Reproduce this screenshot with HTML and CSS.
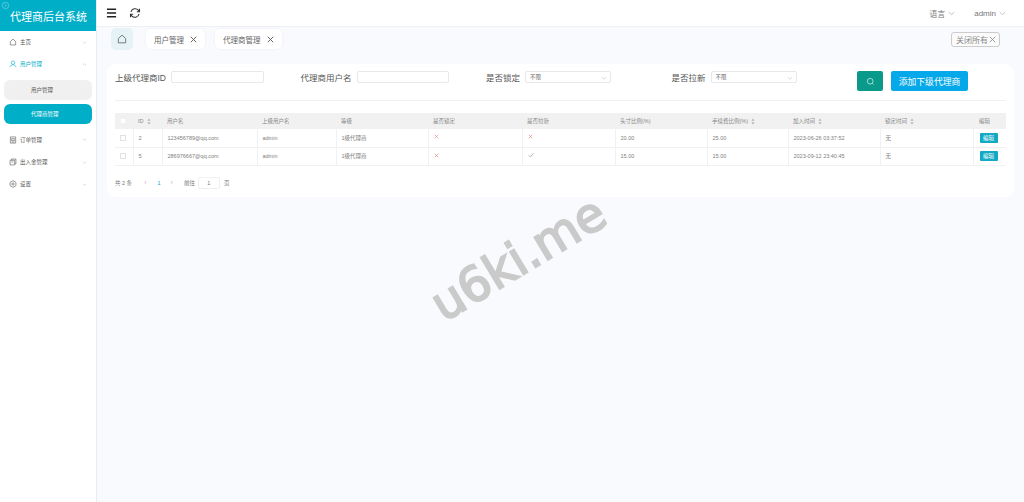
FILE: index.html
```html
<!DOCTYPE html>
<html lang="zh">
<head>
<meta charset="utf-8">
<title>代理商后台系统</title>
<link rel="stylesheet" href="styles.css">
</head>
<body>
<div class="app">
  <aside class="sidebar">
    <div class="brand">
      <svg class="brand-mark" viewBox="0 0 10 10"><circle cx="5" cy="5" r="3.6"/><path d="M4 3.4 6 5 4 6.6"/></svg>
      <span>代理商后台系统</span>
    </div>
    <nav class="menu">
      <div class="menu-item">
        <svg class="mi" viewBox="0 0 12 12"><path d="M2 5.4 6 1.6l4 3.800v5H2z"/></svg>
        <span class="mi-label">主页</span>
        <svg class="chev" viewBox="0 0 8 8"><path d="M1.500 3 4 5.200 6.500 3"/></svg>
      </div>
      <div class="menu-item active">
        <svg class="mi" viewBox="0 0 12 12"><circle cx="6" cy="4" r="2.600"/><path d="M1.600 10.800C2 8.400 4 7.200 6 7.200s4 1.200 4.400 3.600"/></svg>
        <span class="mi-label">用户管理</span>
        <svg class="chev" viewBox="0 0 8 8"><path d="M1.500 5 4 2.800 6.500 5"/></svg>
      </div>
      <div class="sub sub-plain">用户管理</div>
      <div class="sub sub-on">代理商管理</div>
      <div class="menu-item gap-top">
        <svg class="mi" viewBox="0 0 12 12"><path d="M2 1.400h8v9.200H2z"/><path d="M4 4h4v3H4zM4 9h4"/></svg>
        <span class="mi-label">订单管理</span>
        <svg class="chev" viewBox="0 0 8 8"><path d="M1.500 3 4 5.200 6.500 3"/></svg>
      </div>
      <div class="menu-item">
        <svg class="mi" viewBox="0 0 12 12"><path d="M1.600 3.400h7v7h-7zM3.600 3.400V1.600h6.800v7H8.600"/><path d="M3.600 6h3"/></svg>
        <span class="mi-label">出入金管理</span>
        <svg class="chev" viewBox="0 0 8 8"><path d="M1.500 3 4 5.200 6.500 3"/></svg>
      </div>
      <div class="menu-item">
        <svg class="mi" viewBox="0 0 12 12"><path d="M6 1 10.400 3.500v5L6 11 1.600 8.500v-5z"/><circle cx="6" cy="6" r="1.700"/></svg>
        <span class="mi-label">设置</span>
        <svg class="chev" viewBox="0 0 8 8"><path d="M1.500 3 4 5.200 6.500 3"/></svg>
      </div>
    </nav>
  </aside>

  <div class="main">
    <header class="topbar">
      <div class="top-tools">
        <svg class="tool-menu" viewBox="0 0 12 10"><path d="M1 1h10M1 5h10M1 9h10"/></svg>
        <svg class="tool-refresh" viewBox="0 0 12 12"><path d="M2 5a4.200 4.200 0 0 1 7.300-1.800L10.300 4.600M10 7a4.200 4.200 0 0 1-7.300 1.800L1.700 7.400"/><path d="M10.500 1.800v2.900H7.800M1.500 10.200V7.300h2.700"/></svg>
      </div>
      <div class="top-right">
        <span class="top-link">语言<svg class="top-chev" viewBox="0 0 10 6"><path d="M1 1l4 3.600L9 1"/></svg></span>
        <span class="top-link">admin<svg class="top-chev" viewBox="0 0 10 6"><path d="M1 1l4 3.600L9 1"/></svg></span>
      </div>
    </header>

    <div class="tabs">
      <div class="tab-home"><svg viewBox="0 0 12 12"><path d="M1.600 5.400 6 1.400l4.400 4v5.200H1.600z"/></svg></div>
      <div class="tab">用户管理<svg class="tab-x" viewBox="0 0 7 7"><path d="M.8.800l5.400 5.400M6.200.800.800 6.200"/></svg></div>
      <div class="tab">代理商管理<svg class="tab-x" viewBox="0 0 7 7"><path d="M.8.800l5.400 5.400M6.200.800.800 6.200"/></svg></div>
      <div class="close-all">关闭所有<svg class="close-x" viewBox="0 0 7 7"><path d="M.8.800l5.400 5.400M6.200.800.800 6.200"/></svg></div>
    </div>

    <section class="card">
      <div class="filters">
        <div class="field"><label>上级代理商ID</label><div class="input"></div></div>
        <div class="field f2"><label>代理商用户名</label><div class="input"></div></div>
        <div class="field f3"><label>是否锁定</label><div class="select">不限<svg viewBox="0 0 8 8"><path d="M1 3 4 5.600 7 3"/></svg></div></div>
        <div class="field f4"><label>是否拉新</label><div class="select">不限<svg viewBox="0 0 8 8"><path d="M1 3 4 5.600 7 3"/></svg></div></div>
        <button class="btn-search"><svg viewBox="0 0 12 12"><circle cx="5.600" cy="5.600" r="3.800"/><path d="M8.400 8.400 10 10"/></svg></button>
        <button class="btn-add">添加下级代理商</button>
      </div>

      <table class="grid">
        <thead>
          <tr>
            <th class="c-check"><span class="box head-box"></span></th>
            <th class="c-id"><span class="th-in">ID<svg class="sort" viewBox="0 0 4 7"><path d="M2 .4 3.600 2.800H.4zM2 6.600 3.600 4.200H.4z"/></svg></span></th>
            <th class="c-user">用户名</th>
            <th class="c-parent">上级用户名</th>
            <th class="c-level">等级</th>
            <th class="c-lock">是否锁定</th>
            <th class="c-new">是否拉新</th>
            <th class="c-head">头寸比例(%)</th>
            <th class="c-fee"><span class="th-in">手续费比例(%)<svg class="sort" viewBox="0 0 4 7"><path d="M2 .4 3.600 2.800H.4zM2 6.600 3.600 4.200H.4z"/></svg></span></th>
            <th class="c-join"><span class="th-in">加入时间<svg class="sort" viewBox="0 0 4 7"><path d="M2 .4 3.600 2.800H.4zM2 6.600 3.600 4.200H.4z"/></svg></span></th>
            <th class="c-locked"><span class="th-in">锁定时间<svg class="sort" viewBox="0 0 4 7"><path d="M2 .4 3.600 2.800H.4zM2 6.600 3.600 4.200H.4z"/></svg></span></th>
            <th class="c-edit">编辑</th>
          </tr>
        </thead>
        <tbody>
          <tr>
            <td><span class="box"></span></td>
            <td>2</td>
            <td>123456789@qq.com</td>
            <td>admin</td>
            <td>1级代理商</td>
            <td><svg class="no" viewBox="0 0 7 7"><path d="M1 1l5 5M6 1 1 6"/></svg></td>
            <td><svg class="no" viewBox="0 0 7 7"><path d="M1 1l5 5M6 1 1 6"/></svg></td>
            <td>20.00</td>
            <td>25.00</td>
            <td>2023-06-26 03:37:52</td>
            <td>无</td>
            <td><button class="btn-edit">编辑</button></td>
          </tr>
          <tr>
            <td><span class="box"></span></td>
            <td>5</td>
            <td>286976667@qq.com</td>
            <td>admin</td>
            <td>1级代理商</td>
            <td><svg class="no" viewBox="0 0 7 7"><path d="M1 1l5 5M6 1 1 6"/></svg></td>
            <td><svg class="yes" viewBox="0 0 7 7"><path d="M.8 3.800 2.800 5.800 6.400 1.400"/></svg></td>
            <td>15.00</td>
            <td>15.00</td>
            <td>2023-09-12 23:40:45</td>
            <td>无</td>
            <td><button class="btn-edit">编辑</button></td>
          </tr>
        </tbody>
      </table>

      <div class="pager">
        <span>共 2 条</span>
        <span class="pg-arrow">‹</span>
        <span class="pg-num">1</span>
        <span class="pg-arrow">›</span>
        <span class="pg-go">前往</span>
        <span class="pg-input">1</span>
        <span>页</span>
      </div>
    </section>
  </div>
  <div class="watermark">u6ki.me</div>
</div>
</body>
</html>
```
FILE: styles.css
```css
* { box-sizing: border-box; }
html, body { margin: 0; height: 100%; }
body { font-family: "Liberation Sans", "Noto Sans CJK SC", sans-serif; color: #606266; background: #f9fafe; overflow: hidden; }
svg { fill: none; stroke: currentColor; display: block; }
.app { position: relative; display: flex; width: 1024px; height: 502px; }

.sidebar { width: 97px; flex: none; background: #fff; border-right: 1px solid #e9ecf2; }
.brand { position: relative; height: 31px; background: #00aec7; color: #fff; font-size: 11px; display: flex; align-items: center; justify-content: center; padding-left: 1px; }
.brand-mark { position: absolute; left: 1px; top: 1px; width: 9px; height: 9px; stroke: #7fd4e2; stroke-width: .7; }
.menu { display: flex; flex-direction: column; }
.menu-item { height: 22.300px; display: flex; align-items: center; padding: 0 9px 0 9px; font-size: 5.500px; color: #555; }
.menu-item.active { color: #00aec7; }
.gap-top { margin-top: 1px; }
.mi { width: 8px; height: 8px; stroke-width: .9; color: #555; margin-right: 3px; flex: none; }
.active .mi { color: #00aec7; }
.mi-label { flex: 1; }
.chev { width: 5px; height: 5px; stroke: #bbb; stroke-width: .8; }
.sub { width: 88px; height: 20px; margin: 0 0 4px 4px; border-radius: 6px; display: flex; align-items: center; padding-left: 27px; font-size: 5.500px; }
.sub-plain { background: #f0f0f0; color: #555; margin-top: 4px; }
.sub-on { background: #00aec7; color: #fff; }

.main { flex: 1; min-width: 0; }
.topbar { height: 27px; background: #fff; border-bottom: 1px solid #eef0f4; display: flex; align-items: center; justify-content: space-between; padding: 0 18px 0 9px; }
.top-tools { display: flex; align-items: center; gap: 12px; }
.tool-menu { width: 11px; height: 10px; color: #222; stroke-width: 1.600; }
.tool-refresh { width: 12px; height: 12px; color: #333; stroke-width: 1.100; }
.top-right { display: flex; align-items: center; gap: 19px; font-size: 8px; color: #777; }
.top-link { display: flex; align-items: center; gap: 3px; }
.top-chev { width: 7px; height: 5px; stroke: #999; stroke-width: .8; }

.tabs { height: 24px; margin-bottom: 13px; display: flex; align-items: center; padding: 0 10px 0 14px; }
.tab-home { width: 22px; height: 22px; background: #e6f3f6; border-radius: 5px; display: flex; align-items: center; justify-content: center; color: #555; margin-right: 12px; }
.tab-home svg { width: 10px; height: 10px; stroke-width: .9; }
.tab { height: 20px; background: #fff; border-radius: 5px; display: flex; align-items: center; font-size: 7.500px; color: #666; padding: 0 8px; margin-right: 10px; gap: 6px; box-shadow: 0 0 3px rgba(0,0,0,.06); }
.tab-home + .tab { margin-left: 1px; }
.tab-x { width: 7px; height: 7px; color: #555; stroke-width: .9; }
.close-all { margin-left: auto; width: 49px; height: 15px; border: 1px solid #ccc; border-radius: 3px; font-size: 8px; color: #888; display: flex; align-items: center; justify-content: space-between; padding: 0 3px 0 4px; margin-right: 14px; background: #fbfbfb; }
.close-x { width: 7px; height: 7px; stroke-width: .8; }

.card { width: 907px; height: 133px; margin-left: 10px; background: #fff; border-radius: 9px; padding: 0 8px; }
.filters { height: 37px; display: flex; align-items: center; position: relative; border-bottom: 1px solid #eef0f4; padding-bottom: 10px; margin-bottom: 12px; }
.field { display: flex; align-items: center; color: #555; font-size: 8.500px; width: 185.500px; flex: none; height: 15px; }
.field label { margin-right: 5px; white-space: nowrap; }
.input { width: 93px; height: 12px; border: 1px solid #e6e8ec; border-radius: 2px; background: #fff; }
.f2 .input { width: 92px; }
.select { position: relative; width: 86px; height: 12px; border: 1px solid #e6e8ec; border-radius: 2px; font-size: 5.500px; color: #666; display: flex; align-items: center; padding-left: 4px; }
.select svg { position: absolute; right: 3px; top: 2.500px; width: 6px; height: 6px; stroke: #bbb; stroke-width: .7; }
.btn-search { width: 26px; height: 20px; background: #0a9a8c; border: 0; border-radius: 2px; color: #fff; display: flex; align-items: center; justify-content: center; padding: 0; margin: 8px 0 0 0; }
.btn-search svg { width: 9px; height: 9px; stroke-width: .8; }
.btn-add { width: 77px; height: 20px; background: #05a8e8; border: 0; border-radius: 2px; color: #fff; font: 8.800px "Liberation Sans", "Noto Sans CJK SC", sans-serif; padding: 0; margin: 8px 0 0 8px; }

.grid { width: 891px; border-collapse: collapse; table-layout: fixed; font-size: 5.500px; color: #808080; }
.grid th { height: 16px; background: #f1f1f1; font-weight: 400; text-align: left; padding: 0 0 0 5px; color: #888; white-space: nowrap; border: 0; }
.grid td { height: 18px; padding: 0 0 0 5px; border-bottom: 1px solid #f0f1f4; border-right: 1px solid #f0f1f4; white-space: nowrap; }
.grid td:last-child { border-right: 0; padding-left: 6px; }
.grid th:last-child { padding-left: 6px; }
.c-check { width: 18px; }
.c-id { width: 29px; }
.c-user { width: 95px; }
.c-parent { width: 79px; }
.c-level { width: 92px; }
.c-lock { width: 94px; }
.c-new { width: 93px; }
.c-head { width: 92px; }
.c-fee { width: 81px; }
.c-join { width: 92px; }
.c-locked { width: 93px; }
.c-edit { width: 33px; }
.th-in { display: flex; align-items: center; }
.sort { width: 4px; height: 7px; margin-left: 3px; fill: #b5b5b5; stroke: none; }
.box { display: block; width: 6px; height: 6px; border: 1px solid #e2e2e2; background: #fff; }
.head-box { border-color: #f1f1f1; }
.no { width: 5px; height: 5px; color: #e08a7e; stroke-width: .9; margin-bottom: 2px; }
.yes { width: 6px; height: 6px; color: #8a9a90; stroke-width: .8; margin-bottom: 2px; }
.btn-edit { width: 18px; height: 10px; background: #12a9c4; color: #fff; border: 0; border-radius: 1px; padding: 0; font: 5.500px "Liberation Sans", "Noto Sans CJK SC", sans-serif; display: block; }

.pager { display: flex; align-items: center; font-size: 5.500px; color: #777; margin-top: 11px; height: 12px; }
.pg-arrow { color: #bbb; font-size: 7px; margin-left: 12px; }
.pg-num { color: #00aec7; margin-left: 11px; }
.pg-num + .pg-arrow { margin-left: 10px; }
.pg-go { margin-left: 11px; }
.pg-input { width: 22px; height: 12px; border: 1px solid #f0f0f0; border-radius: 2px; margin: 0 4px 0 3px; display: flex; align-items: center; justify-content: center; }

.watermark { position: absolute; left: 518px; top: 258px; transform: translate(-50%, -50%) rotate(-31deg); font: 400 48px "DejaVu Sans", sans-serif; -webkit-text-stroke: 2px #cacaca; color: #cacaca; white-space: nowrap; pointer-events: none; }
```
